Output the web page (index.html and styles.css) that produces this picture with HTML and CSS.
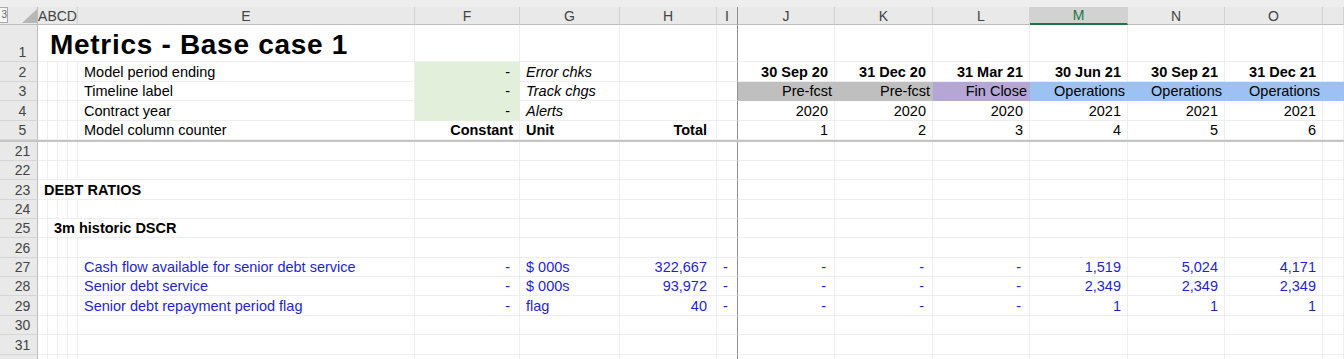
FILE: index.html
```html
<!DOCTYPE html>
<html lang="en">
<head>
    <meta charset="UTF-8">
    <title>Metrics - Base case 1</title>
    <link rel="stylesheet" href="styles.css">
</head>
<body>
    <div class="sheet">
        <!-- top strip + column headers -->
        <div class="strip"></div>
        <div class="corner">
            <span class="lvl">3</span>
            <svg class="all" width="15" height="14" viewBox="0 0 15 14"><polygon points="0,14 15,14 15,0" fill="#b7b7b7"/></svg>
        </div>
        <div class="hd abcd">ABCD</div>
        <div class="hd">E</div>
        <div class="hd">F</div>
        <div class="hd">G</div>
        <div class="hd">H</div>
        <div class="hd fz">I</div>
        <div class="hd">J</div>
        <div class="hd">K</div>
        <div class="hd">L</div>
        <div class="hd sel">M</div>
        <div class="hd">N</div>
        <div class="hd">O</div>
        <div class="hd"></div>

        <!-- row 1 -->
        <div class="rh">1</div>
        <div class="c title">Metrics - Base case 1</div>
        <div class="c"></div><div class="c"></div><div class="c"></div><div class="c fz"></div>
        <div class="c"></div><div class="c"></div><div class="c"></div><div class="c"></div><div class="c"></div><div class="c"></div><div class="c"></div>

        <!-- row 2 -->
        <div class="rh">2</div>
        <div class="c"></div><div class="c"></div><div class="c"></div><div class="c"></div>
        <div class="c e">Model period ending</div>
        <div class="c green fd">-</div>
        <div class="c g i">Error chks</div>
        <div class="c"></div>
        <div class="c fz"></div>
        <div class="c r b">30 Sep 20</div>
        <div class="c r b">31 Dec 20</div>
        <div class="c r b">31 Mar 21</div>
        <div class="c r b">30 Jun 21</div>
        <div class="c r b">30 Sep 21</div>
        <div class="c r b">31 Dec 21</div>
        <div class="c"></div>

        <!-- row 3 -->
        <div class="rh">3</div>
        <div class="c"></div><div class="c"></div><div class="c"></div><div class="c"></div>
        <div class="c e">Timeline label</div>
        <div class="c green fd">-</div>
        <div class="c g i">Track chgs</div>
        <div class="c"></div>
        <div class="c fz"></div>
        <div class="c t pre">Pre-fcst</div>
        <div class="c t pre">Pre-fcst</div>
        <div class="c t fin">Fin Close</div>
        <div class="c t ops">Operations</div>
        <div class="c t ops">Operations</div>
        <div class="c t ops">Operations</div>
        <div class="c ops"></div>

        <!-- row 4 -->
        <div class="rh">4</div>
        <div class="c"></div><div class="c"></div><div class="c"></div><div class="c"></div>
        <div class="c e">Contract year</div>
        <div class="c green fd">-</div>
        <div class="c g i">Alerts</div>
        <div class="c"></div>
        <div class="c fz"></div>
        <div class="c r">2020</div>
        <div class="c r">2020</div>
        <div class="c r">2020</div>
        <div class="c r">2021</div>
        <div class="c r">2021</div>
        <div class="c r">2021</div>
        <div class="c"></div>

        <!-- row 5 -->
        <div class="rh">5</div>
        <div class="c"></div><div class="c"></div><div class="c"></div><div class="c"></div>
        <div class="c e">Model column counter</div>
        <div class="c r b">Constant</div>
        <div class="c g b">Unit</div>
        <div class="c h b">Total</div>
        <div class="c fz"></div>
        <div class="c r">1</div>
        <div class="c r">2</div>
        <div class="c r">3</div>
        <div class="c r">4</div>
        <div class="c r">5</div>
        <div class="c r">6</div>
        <div class="c"></div>

        <!-- frozen panes split -->
        <div class="split"></div>

        <!-- row 21 -->
        <div class="rh">21</div>
        <div class="c"></div><div class="c"></div><div class="c"></div><div class="c"></div><div class="c"></div><div class="c"></div><div class="c"></div><div class="c"></div><div class="c fz"></div>
        <div class="c"></div><div class="c"></div><div class="c"></div><div class="c"></div><div class="c"></div><div class="c"></div><div class="c"></div>

        <!-- row 22 -->
        <div class="rh">22</div>
        <div class="c"></div><div class="c"></div><div class="c"></div><div class="c"></div><div class="c"></div><div class="c"></div><div class="c"></div><div class="c"></div><div class="c fz"></div>
        <div class="c"></div><div class="c"></div><div class="c"></div><div class="c"></div><div class="c"></div><div class="c"></div><div class="c"></div>

        <!-- row 23 -->
        <div class="rh">23</div>
        <div class="c b lbl-a">DEBT RATIOS</div>
        <div class="c"></div><div class="c"></div><div class="c"></div><div class="c fz"></div>
        <div class="c"></div><div class="c"></div><div class="c"></div><div class="c"></div><div class="c"></div><div class="c"></div><div class="c"></div>

        <!-- row 24 -->
        <div class="rh">24</div>
        <div class="c"></div><div class="c"></div><div class="c"></div><div class="c"></div><div class="c"></div><div class="c"></div><div class="c"></div><div class="c"></div><div class="c fz"></div>
        <div class="c"></div><div class="c"></div><div class="c"></div><div class="c"></div><div class="c"></div><div class="c"></div><div class="c"></div>

        <!-- row 25 -->
        <div class="rh">25</div>
        <div class="c"></div>
        <div class="c b lbl-b">3m historic DSCR</div>
        <div class="c"></div><div class="c"></div><div class="c"></div><div class="c fz"></div>
        <div class="c"></div><div class="c"></div><div class="c"></div><div class="c"></div><div class="c"></div><div class="c"></div><div class="c"></div>

        <!-- row 26 -->
        <div class="rh">26</div>
        <div class="c"></div><div class="c"></div><div class="c"></div><div class="c"></div><div class="c"></div><div class="c"></div><div class="c"></div><div class="c"></div><div class="c fz"></div>
        <div class="c"></div><div class="c"></div><div class="c"></div><div class="c"></div><div class="c"></div><div class="c"></div><div class="c"></div>

        <!-- row 27 -->
        <div class="rh">27</div>
        <div class="c"></div><div class="c"></div><div class="c"></div><div class="c"></div>
        <div class="c e blue">Cash flow available for senior debt service</div>
        <div class="c fd blue">-</div>
        <div class="c g blue">$ 000s</div>
        <div class="c h blue">322,667</div>
        <div class="c fz id blue">-</div>
        <div class="c d blue">-</div>
        <div class="c d blue">-</div>
        <div class="c d blue">-</div>
        <div class="c r blue">1,519</div>
        <div class="c r blue">5,024</div>
        <div class="c r blue">4,171</div>
        <div class="c"></div>

        <!-- row 28 -->
        <div class="rh">28</div>
        <div class="c"></div><div class="c"></div><div class="c"></div><div class="c"></div>
        <div class="c e blue">Senior debt service</div>
        <div class="c fd blue">-</div>
        <div class="c g blue">$ 000s</div>
        <div class="c h blue">93,972</div>
        <div class="c fz id blue">-</div>
        <div class="c d blue">-</div>
        <div class="c d blue">-</div>
        <div class="c d blue">-</div>
        <div class="c r blue">2,349</div>
        <div class="c r blue">2,349</div>
        <div class="c r blue">2,349</div>
        <div class="c"></div>

        <!-- row 29 -->
        <div class="rh">29</div>
        <div class="c"></div><div class="c"></div><div class="c"></div><div class="c"></div>
        <div class="c e blue">Senior debt repayment period flag</div>
        <div class="c fd blue">-</div>
        <div class="c g blue">flag</div>
        <div class="c h blue">40</div>
        <div class="c fz id blue">-</div>
        <div class="c d blue">-</div>
        <div class="c d blue">-</div>
        <div class="c d blue">-</div>
        <div class="c r blue">1</div>
        <div class="c r blue">1</div>
        <div class="c r blue">1</div>
        <div class="c"></div>

        <!-- row 30 -->
        <div class="rh">30</div>
        <div class="c"></div><div class="c"></div><div class="c"></div><div class="c"></div><div class="c"></div><div class="c"></div><div class="c"></div><div class="c"></div><div class="c fz"></div>
        <div class="c"></div><div class="c"></div><div class="c"></div><div class="c"></div><div class="c"></div><div class="c"></div><div class="c"></div>

        <!-- row 31 -->
        <div class="rh">31</div>
        <div class="c"></div><div class="c"></div><div class="c"></div><div class="c"></div><div class="c"></div><div class="c"></div><div class="c"></div><div class="c"></div><div class="c fz"></div>
        <div class="c"></div><div class="c"></div><div class="c"></div><div class="c"></div><div class="c"></div><div class="c"></div><div class="c"></div>

        <!-- row 32, only its top edge shows -->
        <div class="rh"></div>
        <div class="c"></div><div class="c"></div><div class="c"></div><div class="c"></div><div class="c"></div><div class="c"></div><div class="c"></div><div class="c"></div><div class="c fz"></div>
        <div class="c"></div><div class="c"></div><div class="c"></div><div class="c"></div><div class="c"></div><div class="c"></div><div class="c"></div>
    </div>
</body>
</html>
```

FILE: styles.css
```css
:root {
    --hdr-bg: #e9e9e9;
    --hdr-line: #d2d2d2;
    --hdr-edge: #bdbdbd;
    --grid: #eeeeee;
    --freeze: #8f8f8f;
    --input-blue: #1f1fd1;
    --excel-green: #217346;
}

* {
    margin: 0;
    padding: 0;
    box-sizing: border-box;
}

body {
    width: 1344px;
    height: 359px;
    overflow: hidden;
    background: #fff;
    color: #000;
    font-family: 'Liberation Sans', Arial, sans-serif;
    font-size: 14.5px;
}

/* Sheet grid */
.sheet {
    display: grid;
    grid-template-columns: 38px repeat(4, 10px) 337px 105px 100px 97px 21px 97px 98px 97px 98px 97px 98px 21px;
    grid-template-rows: 7px 18px 37px 20px 19px 20px 19px 2px 19px 19px 20px 19px 19px 20px 19px 19px 20px 19px 20px 19px;
}

.strip {
    grid-column: 1 / -1;
    background: #eeeeee;
}

.split {
    grid-column: 1 / -1;
    background: #c4c4c4;
}

/* Headers */
.corner {
    background: var(--hdr-bg);
    border-right: 1px solid var(--hdr-edge);
    border-bottom: 1px solid var(--hdr-edge);
    display: flex;
    justify-content: space-between;
}

.lvl {
    width: 8px;
    height: 16px;
    border: 1px solid #a9a9a9;
    border-left: none;
    background: #f6f6f6;
    color: #666;
    font-size: 10px;
    line-height: 14px;
    text-align: right;
    overflow: hidden;
}

.all {
    align-self: flex-end;
    margin-bottom: 1px;
}

.hd {
    background: var(--hdr-bg);
    border-right: 1px solid var(--hdr-line);
    border-bottom: 1px solid var(--hdr-edge);
    display: flex;
    justify-content: center;
    align-items: center;
    font-size: 14px;
    line-height: 16px;
    color: #444;
}

.hd.abcd {
    grid-column: span 4;
}

.hd.sel {
    background: #d2d2d2;
    color: var(--excel-green);
    border-bottom: 2px solid var(--excel-green);
}

.rh {
    background: var(--hdr-bg);
    border-right: 1px solid var(--hdr-edge);
    border-bottom: 1px solid #d6d6d6;
    display: flex;
    justify-content: center;
    align-items: flex-end;
    padding: 0 0 1px 8px;
    font-size: 14px;
    line-height: 16px;
    color: #444;
}

/* Cells */
.c {
    border-right: 1px solid var(--grid);
    border-bottom: 1px solid var(--grid);
    display: flex;
    align-items: flex-end;
    padding: 0 3px 1px;
    line-height: 16px;
    white-space: nowrap;
}

.fz,
.hd.fz {
    border-right-color: var(--freeze);
}

.title {
    grid-column: span 5;
    font-size: 28px;
    font-weight: 700;
    line-height: 30px;
    letter-spacing: 0.7px;
    padding-left: 12px;
}

.lbl-a {
    grid-column: span 5;
    padding-left: 6px;
}

.lbl-b {
    grid-column: span 4;
    padding-left: 6px;
}

.e { padding-left: 6px; }
.g { padding-left: 6px; }

.r {
    justify-content: flex-end;
    padding-right: 6px;
}

.h {
    justify-content: flex-end;
    padding-right: 9px;
}

.d {
    justify-content: flex-end;
    padding-right: 8px;
}

.fd {
    justify-content: flex-end;
    padding-right: 9px;
}

.id { padding-left: 6px; }

.t {
    justify-content: flex-end;
    padding-right: 2px;
}

.b { font-weight: 700; }
.i { font-style: italic; }
.blue { color: var(--input-blue); }

/* Fills */
.green,
.pre,
.fin,
.ops {
    border-color: transparent;
}

.green { background: #e2efda; }
.pre { background: #bfbfbf; }
.fin { background: #b4a7d6; }
.ops { background: #9bc2f3; }
```
